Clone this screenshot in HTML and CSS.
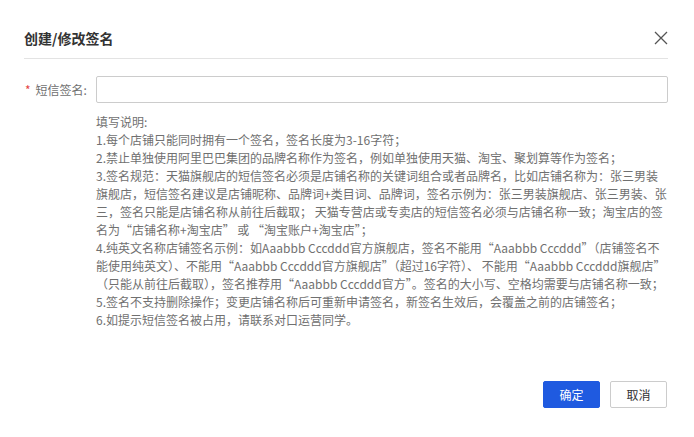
FILE: index.html
```html
<!DOCTYPE html>
<html lang="zh-CN">
<head>
    <meta charset="UTF-8">
    <meta name="viewport" content="width=device-width, initial-scale=1.0">
    <title>创建/修改签名</title>
    <link rel="stylesheet" href="styles.css">
</head>
<body>
    <div class="dialog">
        <div class="dialog-header">
            <span class="dialog-title">创建/修改签名</span>
            <span class="dialog-close">
                <svg width="14" height="14" viewBox="0 0 14 14">
                    <path d="M1 1 L13 13 M13 1 L1 13" stroke="#555" stroke-width="1.3" fill="none"/>
                </svg>
            </span>
        </div>
        <div class="form-row">
            <label for="signName" class="form-label"><span class="required">*</span>短信签名:</label>
            <input type="text" id="signName" class="form-input">
        </div>
        <div class="help-text">
            填写说明:<br>
            1.每个店铺只能同时拥有一个签名，签名长度为3-16字符；<br>
            2.禁止单独使用阿里巴巴集团的品牌名称作为签名，例如单独使用天猫、淘宝、聚划算等作为签名；<br>
            3.签名规范：天猫旗舰店的短信签名必须是店铺名称的关键词组合或者品牌名，比如店铺名称为：张三男装<br>
            旗舰店，短信签名建议是店铺昵称、品牌词+类目词、品牌词，签名示例为：张三男装旗舰店、张三男装、张<br>
            三，签名只能是店铺名称从前往后截取；&nbsp;天猫专营店或专卖店的短信签名必须与店铺名称一致；淘宝店的签<br>
            名为“店铺名称+淘宝店” 或 “淘宝账户+淘宝店”；<br>
            4.纯英文名称店铺签名示例：如Aaabbb Cccddd官方旗舰店，签名不能用“Aaabbb Cccddd”（店铺签名不<br>
            能使用纯英文）、不能用“Aaabbb Cccddd官方旗舰店”（超过16字符）、 不能用“Aaabbb Cccddd旗舰店”<br>
            （只能从前往后截取），签名推荐用“Aaabbb Cccddd官方”。签名的大小写、空格均需要与店铺名称一致；<br>
            5.签名不支持删除操作；变更店铺名称后可重新申请签名，新签名生效后，会覆盖之前的店铺签名；<br>
            6.如提示短信签名被占用，请联系对口运营同学。
        </div>
        <div class="dialog-footer">
            <button class="btn btn-primary">确定</button>
            <button class="btn">取消</button>
        </div>
    </div>
</body>
</html>
```

FILE: styles.css
```css
* {
    box-sizing: border-box;
}

body {
    margin: 0;
    background: #fff;
    font-family: "Noto Sans CJK SC", "Noto Sans", sans-serif;
    color: #333;
}

.dialog {
    padding: 0 26px 0 24px;
}

.dialog-header {
    display: flex;
    justify-content: space-between;
    align-items: center;
    padding: 28px 0 10px;
    border-bottom: 1px solid #e3e3e3;
}

.dialog-title {
    font-size: 14px;
    line-height: 20px;
    font-weight: 600;
    color: #333;
}

.dialog-close {
    display: flex;
    cursor: pointer;
}

.form-row {
    display: flex;
    align-items: center;
    margin-top: 17px;
}

.form-label {
    width: 72px;
    padding-left: 1px;
    font-size: 12px;
    color: #707070;
}

.required {
    color: #e54545;
    margin-right: 5px;
}

.form-input {
    flex: 1;
    height: 27px;
    border: 1px solid #ccc;
    border-radius: 2px;
    outline: none;
}

.help-text {
    margin-top: 10px;
    padding-left: 72px;
    font-size: 12px;
    line-height: 18px;
    color: #707070;
    white-space: nowrap;
}

.dialog-footer {
    display: flex;
    justify-content: flex-end;
    gap: 10px;
    margin-top: 52px;
    padding-right: 1px;
}

.btn {
    width: 57px;
    height: 27px;
    font-family: inherit;
    font-size: 12px;
    color: #333;
    background: #fff;
    border: 1px solid #ccc;
    border-radius: 2px;
    cursor: pointer;
}

.btn-primary {
    background: #1f5ae0;
    border-color: #1f5ae0;
    color: #fff;
}
```
